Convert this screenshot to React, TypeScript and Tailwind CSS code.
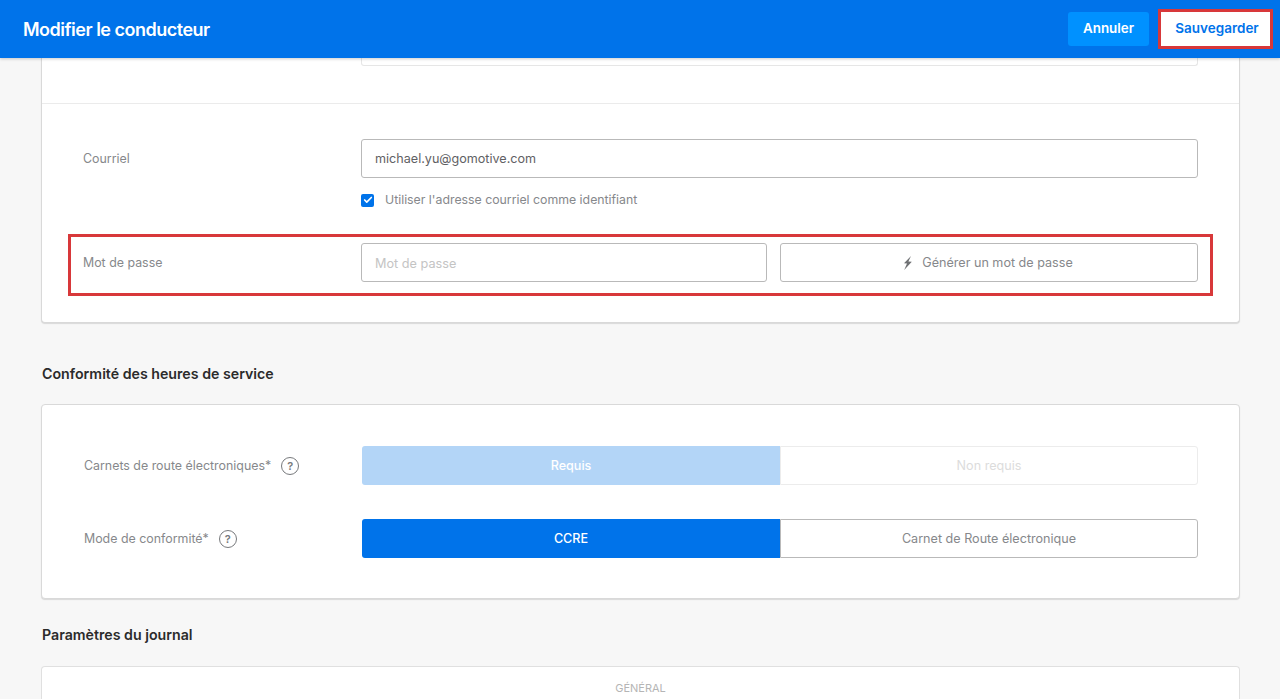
import { Check } from 'lucide-react';

function HelpIcon() {
  return (
    <span className="ml-[10px] flex h-[18px] w-[18px] items-center justify-center rounded-full border-[1.5px] border-[#77797c] text-[11px] font-semibold text-[#77797c]">
      ?
    </span>
  );
}

export default function App() {
  return (
    <div className="flex h-[699px] flex-col overflow-hidden bg-[#f7f7f7] font-['Inter',sans-serif] text-[12.4px] text-[#86888b]">
      {/* Header */}
      <header className="relative z-10 flex h-[58px] shrink-0 items-center justify-between bg-[#0073ea] pl-[23px] pr-[7px] shadow-[0_1px_3px_rgba(0,0,0,0.2)]">
        <h1 className="text-[18px] font-semibold tracking-[-0.5px] text-white">Modifier le conducteur</h1>
        <div className="flex items-center gap-[9px]">
          <button className="h-[34px] w-[81px] rounded-[3px] bg-[#0091ff] pb-[2px] text-[13.4px] font-semibold text-white">Annuler</button>
          <button className="h-[40px] w-[115px] border-[3px] border-[#d8383a] bg-white pb-[2px] pl-[3px] text-[13.5px] font-semibold text-[#0073ea]">Sauvegarder</button>
        </div>
      </header>

      <main className="px-[41px]">
        {/* Driver details */}
        <section className="h-[265px] w-[1199px] rounded-b-[4px] border-x border-b border-[#d9d9d9] bg-white shadow-[0_1px_1px_rgba(0,0,0,0.12)]">
          <div className="h-[46px] border-b border-[#ebebeb] pr-[41px]">
            <div className="ml-[319px] h-[8px] rounded-b-[3px] border-x border-b border-[#e6e6e6]" />
          </div>

          <div className="flex pl-[41px] pr-[41px] pt-[35px]">
            <label className="w-[278px] pt-[11px]">Courriel</label>
            <div className="flex-1">
              <input
                readOnly
                value="michael.yu@gomotive.com"
                className="block h-[39px] w-full rounded-[3px] border border-[#b9b9b9] px-[13px] text-[12.6px] text-[#5f6164] outline-none"
              />
              <div className="mt-[14px] flex h-[16px] items-center gap-[11px] text-[12.3px]">
                <span className="flex h-[13px] w-[13px] items-center justify-center rounded-[2px] bg-[#0073ea]">
                  <Check size={10} strokeWidth={4} className="text-white" />
                </span>
                <span>Utiliser l'adresse courriel comme identifiant</span>
              </div>
            </div>
          </div>

          <div className="mx-[26px] mt-[26px] flex h-[62px] items-start border-[3px] border-[#d8383a] pl-[12px] pr-[12px] pt-[6px]">
            <label className="w-[278px] leading-[39px]">Mot de passe</label>
            <div className="flex flex-1 gap-[13px]">
              <input
                readOnly
                placeholder="Mot de passe"
                className="h-[39px] w-[406px] rounded-[3px] border border-[#b9b9b9] px-[13px] pt-[1px] text-[12.7px] outline-none placeholder:text-[#c4c4c4]"
              />
              <button className="flex h-[39px] flex-1 items-center justify-center gap-[10px] rounded-[3px] border border-[#b9b9b9] pr-[2px] pt-[1px] text-[12.6px] text-[#86888b]">
                <svg width="9" height="14" viewBox="0 0 9 14" className="mb-[1px] fill-[#6f7174]">
                  <path d="M8 0 1 7.2 4 7.4 1.2 14 8.8 5.8 5.4 5.6z" />
                </svg>
                Générer un mot de passe
              </button>
            </div>
          </div>
        </section>

        {/* Hours of service */}
        <h2 className="mt-[41px] h-[18px] pl-[1px] text-[14.2px] leading-[19px] font-semibold text-[#2b2b2b]">Conformité des heures de service</h2>
        <section className="mt-[22px] h-[195px] w-[1199px] rounded-[4px] border border-[#d9d9d9] bg-white pl-[42px] pr-[41px] pt-[41px] shadow-[0_1px_1px_rgba(0,0,0,0.12)]">
          <div className="flex h-[39px] items-center">
            <div className="flex w-[278px] items-center pt-[2px]">
              <span>Carnets de route électroniques*</span>
              <HelpIcon />
            </div>
            <div className="flex h-[39px] flex-1 text-center text-[12.6px] leading-[39px]">
              <div className="w-[418px] rounded-l-[3px] bg-[#b3d5f7] font-medium text-white">Requis</div>
              <div className="flex-1 rounded-r-[3px] border border-[#ececec] leading-[37px] text-[#dcdcdc]">Non requis</div>
            </div>
          </div>
          <div className="mt-[34px] flex h-[39px] items-center">
            <div className="flex w-[278px] items-center pt-[2px]">
              <span>Mode de conformité*</span>
              <HelpIcon />
            </div>
            <div className="flex h-[39px] flex-1 text-center text-[12.6px] leading-[39px]">
              <div className="w-[418px] rounded-l-[3px] bg-[#0073ea] font-medium text-white">CCRE</div>
              <div className="flex-1 rounded-r-[3px] border border-[#b9b9b9] leading-[37px]">Carnet de Route électronique</div>
            </div>
          </div>
        </section>

        {/* Log settings */}
        <h2 className="mt-[27px] h-[18px] pl-[1px] text-[14.2px] leading-[18px] font-semibold text-[#2b2b2b]">Paramètres du journal</h2>
        <section className="mt-[22px] h-[60px] w-[1199px] rounded-t-[4px] border-x border-t border-[#e0e0e0] bg-white pt-[13px] text-center text-[11px] text-[#b5b5b5]">
          GÉNÉRAL
        </section>
      </main>
    </div>
  );
}
